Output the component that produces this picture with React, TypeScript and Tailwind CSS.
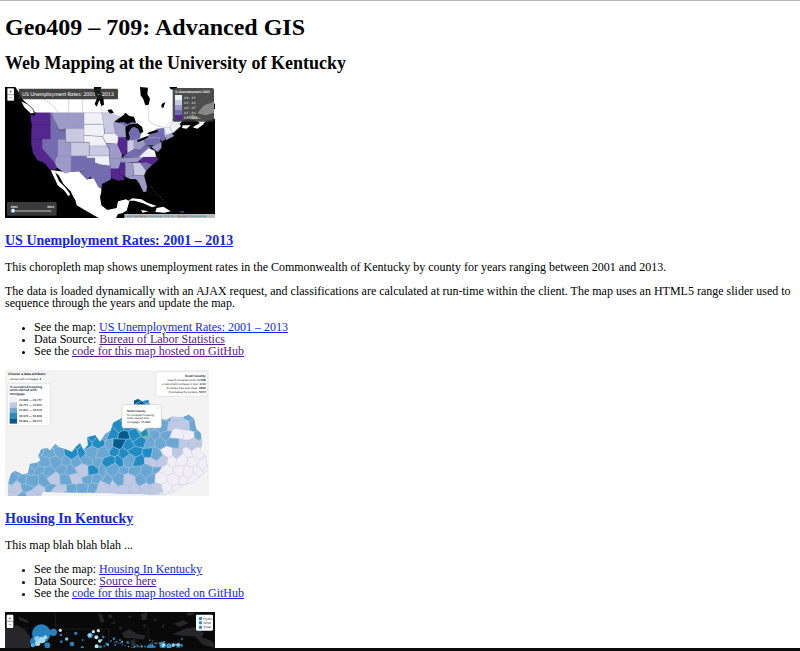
import type { ReactNode } from "react";

const deep = "#54278f";
const mid = "#756bb1";
const soft = "#9e9ac8";
const pale = "#cbc9e2";
const faint = "#f2f0f7";

const states: [string, string][] = [
  [deep, "92,104 104,107 107,98 152,98 152,134 96,134 92,118"],
  [deep, "96,134 152,134 152,178 94,178 94,158"],
  [deep, "94,178 127,178 127,205 165,248 170,262 166,270 148,268 135,250 112,240 99,218 94,192"],
  [mid, "127,178 174,178 174,228 168,232 165,248 127,205"],
  [mid, "152,98 158,98 160,115 168,128 172,146 184,152 197,148 197,178 152,178"],
  [soft, "158,98 252,98 252,146 197,146 184,150 174,146 168,128 160,115"],
  [pale, "197,145 252,145 252,187 197,187"],
  [soft, "174,178 197,178 197,187 213,187 213,228 174,228"],
  [pale, "213,187 268,187 268,228 213,228"],
  [soft, "174,228 213,228 213,275 195,280 170,262 165,248 168,232"],
  [mid, "213,228 260,228 260,272 222,274 213,275"],
  [faint, "252,98 306,98 311,133 252,133"],
  [faint, "252,133 311,133 314,165 308,170 252,166"],
  [faint, "252,166 308,170 322,198 268,199 268,187 252,187"],
  [pale, "268,198 322,198 328,208 328,228 268,228"],
  [faint, "260,228 328,228 330,258 300,254 284,248 284,234 260,234"],
  [mid, "260,234 284,234 284,248 300,254 330,258 335,282 331,300 314,314 307,327 296,322 282,296 270,290 262,300 238,275 260,272"],
  [pale, "306,98 325,98 360,110 342,126 345,160 314,160 311,133"],
  [faint, "314,160 350,160 358,175 352,192 318,190 308,170"],
  [soft, "318,191 352,192 366,222 364,236 328,235 328,205"],
  [soft, "328,235 364,235 358,268 332,268"],
  [deep, "332,266 357,266 357,285 370,287 374,300 356,303 334,294"],
  [deep, "362,247 376,246 376,288 358,285 356,266"],
  [soft, "340,130 352,124 378,138 382,172 356,172 345,160"],
  [mid, "353,123 372,112 408,128 396,134 378,140"],
  [mid, "392,142 408,136 416,148 424,160 418,179 390,181 386,160"],
  [deep, "355,172 380,172 383,205 376,226 366,222 354,196"],
  [pale, "382,181 402,180 402,208 382,220"],
  [soft, "402,180 430,175 437,195 420,210 402,208"],
  [mid, "366,233 382,220 402,208 420,212 428,220 415,232"],
  [soft, "364,235 436,230 412,246 360,247"],
  [mid, "420,210 437,196 452,200 440,220 426,222"],
  [faint, "415,232 426,222 446,204 464,212 469,232"],
  [deep, "430,232 472,232 474,240 458,254 440,246 410,249"],
  [mid, "420,249 440,247 456,254 438,272"],
  [pale, "398,248 420,248 438,272 432,287 402,286"],
  [soft, "376,246 398,248 402,286 382,292 376,290"],
  [soft, "380,291 402,286 432,287 441,320 438,335 430,335 418,310 408,297 392,298"],
  [mid, "430,176 475,172 482,184 475,195 437,196"],
  [mid, "440,174 450,160 472,146 492,144 496,178 488,184 474,172"],
  [faint, "492,144 512,140 516,160 498,162"],
  [faint, "510,140 518,122 532,122 543,138 518,160"],
  [soft, "496,165 516,161 522,168 498,180"],
  [soft, "474,192 484,186 484,204 472,216 454,200"],
];

function UnemploymentMap() {
  return (
    <svg
      role="img"
      aria-label="Choropleth map of US unemployment rates"
      viewBox="15 21 630 393"
      textRendering="geometricPrecision"
      className="block h-[131px] w-[210px] font-['Lato',sans-serif]"
    >
      <rect x="15" y="21" width="630" height="393" fill="#000" />
      <g fill="#fff">
        <path d="M46 21H645V70L625 84 610 100 632 96 645 86V116L620 122 606 134 592 124 570 116 548 122 534 138 518 158 500 170 480 178H360L300 130 108 98 96 90 82 72 66 56 57 38Z" />
        <path d="M62 62 82 72 98 86 104 100 92 101 72 82Z" stroke="#000" strokeWidth="2" />
        <path d="M152 270 196 276 238 274 262 298 282 294 296 320 307 327 300 350 304 376 322 390 350 384 354 364 378 358 388 364 380 392 366 400 354 402 348 414H296L258 392 230 376 226 360 190 312 176 286 172 288 184 312 204 332 212 344 206 348 196 332 178 320 162 292Z" />
        <path d="M384 362 398 355 424 358 442 368 470 378 456 382 430 370 404 362ZM470 384 490 380 512 394 494 398 466 396ZM423 390 446 394 428 398Z" />
        <path d="M578 142 598 130 612 132 592 146ZM548 136 572 136 560 146 546 144Z" />
      </g>
      <path d="M164 276 174 284 190 312 212 334 226 364 214 352 198 334 182 318 168 294Z" fill="#000" />
      <path d="M156 272 165 276 177 304 194 320 211 343 204 347 190 328 172 314Z" fill="#fff" />
      <path d="M540 393h12v5h-12Z" fill={deep} />
      <path
        d="M130 55 164 82 174 98M206 50V98M248 50V98M306 98 304 70M445 76V116L454 130 474 138 492 142 520 118"
        fill="none"
        stroke="#c4c4c4"
        strokeWidth="2"
      />
      <g fill="#000">
        <path d="M282 21 304 21 300 34 310 52 312 74 304 78 298 60 290 80 284 72 292 52 282 42Z" />
        <path d="M322 90 334 88 342 98 330 102ZM420 21 444 23 442 42 450 56 446 74 436 76 430 58 422 46ZM485 72 496 66 490 84 484 82ZM508 21 532 21 526 30 512 28Z" />
      </g>
      <g strokeWidth="1" strokeLinejoin="round">
        {states.map(([fill, points]) => (
          <polygon key={points} fill={fill} stroke={fill === deep ? "#4a2583" : "#8d88ab"} points={points} />
        ))}
      </g>
      <g fill="#000">
        <path d="M342 126 358 114 370 106 376 98 388 108 402 110 408 128 396 126 382 132 370 126 358 128Z" />
        <path d="M376 142 386 134 412 130 426 140 430 156 420 160 414 146 402 140 394 144 386 158 390 174 384 182 378 174ZM410 182 426 174 442 168 446 172 430 180 414 186ZM440 162 448 156 472 150 474 156 452 162Z" />
        <path d="M304 330 306 312 330 300 360 302 376 298 394 298 406 299 418 320 426 340 384 354 354 362 346 382 322 388 306 372Z" />
      </g>
      <path d="M452 318 466 340 484 354 494 368M448 338 456 346" fill="none" stroke="#777" strokeDasharray="3 6" strokeWidth="2" />
      <rect x="22" y="25" width="20" height="37" rx="3" fill="#fff" stroke="#888" />
      <path d="M28 35h8M32 31v8M28 53h8M22 44h20" stroke="#777" strokeWidth="2" />
      <rect x="56" y="26" width="298" height="32" rx="4" fill="#222" fillOpacity=".85" />
      <text x="66" y="48" fontSize="16" fill="#fff">US Unemployment Rates: 2001 – 2013</text>
      <g>
        <rect x="518" y="24" width="124" height="101" rx="5" fill="#333" fillOpacity=".88" />
        <path d="M592 100 612 76 642 66V98L618 106ZM558 110 580 104 604 116 570 118Z" fill="#888" />
        <path d="M518 118 560 84 600 70 638 30" fill="none" stroke="#555" strokeWidth="3" />
        <text x="525" y="38" fontSize="10" fontWeight="bold" fill="#fff">% Unemployment 2001</text>
        {[
          [faint, "2.8 – 3.7"],
          [pale, "3.7 – 4.3"],
          [soft, "4.3 – 4.7"],
          [mid, "4.7 – 5.6"],
          [deep, "5.6 – 11.4"],
        ].map(([fill, label], i) => (
          <g key={label}>
            <rect x="525" y={45 + i * 15} width="21" height="15" fill={fill} />
            <text x="552" y={56 + i * 15} fontSize="9" fontWeight="bold" fill="#ddd">{label}</text>
          </g>
        ))}
      </g>
      <rect x="21" y="366" width="149" height="41" rx="4" fill="#3b3b3b" />
      <g fontSize="9" fontWeight="bold" fill="#fff">
        <text x="32" y="383">2001</text>
        <text x="142" y="383">2013</text>
      </g>
      <path d="M36 393H154" stroke="#999" strokeWidth="5" />
      <circle cx="39" cy="392" r="6" fill="#fff" stroke="#2b8bdc" strokeWidth="2" />
      <rect x="373" y="402" width="272" height="12" fill="#bbb" />
      <text x="376" y="410" fontSize="7" fill="#333">
        <tspan fill="#0078a8">Leaflet</tspan> | Map tiles by <tspan fill="#0078a8">Stamen Design, CC BY 3.0</tspan> — Map data © <tspan fill="#0078a8">OpenStreetMap</tspan>
      </text>
    </svg>
  );
}

// Seeds that decide the class of the counties around them.
const seeds: [number, number, string][] = [
  [40, 335, "#6ba7d3"], [40, 374, "#c0c8e4"], [72, 370, "#6ba7d3"], [104, 374, "#c0c8e4"],
  [110, 325, "#6ba7d3"], [140, 350, "#6ba7d3"], [175, 345, "#c0c8e4"], [150, 270, "#6ba7d3"],
  [205, 350, "#6ba7d3"], [210, 290, "#6ba7d3"], [240, 312, "#c0c8e4"], [238, 240, "#218bc3"],
  [282, 224, "#218bc3"], [282, 312, "#218bc3"], [265, 270, "#6ba7d3"], [260, 350, "#6ba7d3"],
  [310, 330, "#6ba7d3"], [320, 366, "#c0c8e4"], [305, 250, "#6ba7d3"], [322, 215, "#6ba7d3"],
  [330, 260, "#218bc3"], [350, 196, "#218bc3"], [362, 217, "#045a8d"], [345, 240, "#218bc3"],
  [375, 165, "#218bc3"], [375, 245, "#218bc3"], [411, 104, "#045a8d"], [435, 104, "#218bc3"],
  [395, 215, "#218bc3"], [405, 240, "#218bc3"], [434, 262, "#218bc3"], [450, 252, "#6ba7d3"],
  [340, 285, "#218bc3"], [370, 270, "#218bc3"], [405, 265, "#218bc3"],
  [430, 190, "#6ba7d3"], [455, 215, "#6ba7d3"], [485, 175, "#6ba7d3"], [500, 215, "#6ba7d3"],
  [350, 318, "#6ba7d3"], [400, 295, "#6ba7d3"], [428, 318, "#6ba7d3"], [465, 322, "#6ba7d3"],
  [345, 350, "#c0c8e4"], [390, 350, "#c0c8e4"], [450, 360, "#c0c8e4"], [465, 290, "#c0c8e4"],
  [530, 168, "#c0c8e4"], [570, 160, "#6ba7d3"], [590, 185, "#6ba7d3"], [540, 235, "#c0c8e4"],
  [557, 208, "#f1eef6"], [590, 220, "#c0c8e4"], [510, 260, "#f1eef6"], [520, 310, "#f1eef6"],
  [570, 280, "#f1eef6"], [605, 275, "#f1eef6"], [500, 350, "#f1eef6"], [540, 350, "#f1eef6"],
];

function countyFill(x: number, y: number) {
  let best = Infinity;
  let fill = "#6ba7d3";
  for (const [sx, sy, color] of seeds) {
    const d = (sx - x) ** 2 + (sy - y) ** 2;
    if (d < best) {
      best = d;
      fill = color;
    }
  }
  return fill;
}

function jitter(x: number, y: number): [number, number] {
  const a = Math.sin(Math.round(x) * 12.9 + Math.round(y) * 78.2) * 4375;
  const b = Math.sin(Math.round(x) * 39.3 + Math.round(y) * 11.1) * 2463;
  return [x + (a - Math.floor(a) - 0.5) * 14, y + (b - Math.floor(b) - 0.5) * 14];
}

const counties: { points: string; fill: string }[] = [];
for (let row = 0; row < 12; row++) {
  for (let col = 0; col < 20; col++) {
    const cx = 20 + col * 32 + (row % 2) * 16;
    const cy = 92 + row * 27;
    const corners = [[0, -18], [16, -9], [16, 9], [0, 18], [-16, 9], [-16, -9]];
    counties.push({
      points: corners.map(([dx, dy]) => jitter(cx + dx, cy + dy).map(Math.round).join(",")).join(" "),
      fill: countyFill(cx, cy),
    });
  }
}

function HousingMap() {
  return (
    <svg
      role="img"
      aria-label="Choropleth map of housing in Kentucky"
      viewBox="15 6 612 378"
      textRendering="geometricPrecision"
      className="block h-[126px] w-[204px] font-['Liberation_Sans',Arial,sans-serif]"
    >
      <rect x="15" y="6" width="612" height="378" fill="#f3f3f3" />
      <clipPath id="kentucky">
        <path d="M25 384V344L34 316 46 309 68 320 84 316 90 288 112 284 122 276 115 264 124 244 142 240 150 248 166 228 176 238 196 244 216 252 228 236 240 226 250 246 264 232 262 208 286 202 300 222 316 198 332 188 340 164 366 150 386 138 402 116 402 98 414 93 426 100 445 96 452 122 482 154 500 156 516 146 548 148 566 140 582 152 588 182 602 196 606 228 600 246 616 266 625 304 582 342 550 352 520 374 490 380 300 374 128 372 122 384Z" />
      </clipPath>
      <g clipPath="url(#kentucky)" stroke="#a9c8e0" strokeWidth="1.5" strokeLinejoin="round">
        <rect x="15" y="80" width="612" height="304" fill="#6ba7d3" />
        {counties.map((c) => (
          <polygon
            key={c.points}
            points={c.points}
            fill={c.fill}
            stroke={c.fill === "#f1eef6" ? "#dcdbe8" : "#a9c8e0"}
          />
        ))}
      </g>
      <path d="M418 190 440 182 446 202 426 208Z" fill="#218bc3" stroke="#7fc77d" strokeWidth="3" />
      <text x="24" y="20" fontSize="10" fontWeight="bold" fill="#222">Choose a data attribute:</text>
      <rect x="23" y="25" width="106" height="16" rx="4" fill="#fff" />
      <text x="29" y="36" fontSize="9" fill="#222">owned with mortgage ⬍</text>
      <rect x="23" y="47" width="129" height="126" rx="4" fill="#fff" stroke="#ddd" strokeWidth="2" />
      <g fontSize="10" fontWeight="bold" fill="#24304a">
        <text x="29" y="60">% occupied housing</text>
        <text x="29" y="70">units owned with</text>
        <text x="29" y="80">mortgage</text>
      </g>
      {[
        ["#f1eef6", "24.983 — 33.757"],
        ["#bdc9e1", "33.757 — 40.812"],
        ["#74a9cf", "40.812 — 46.976"],
        ["#2b8cbe", "46.976 — 56.849"],
        ["#045a8d", "56.849 — 66.272"],
      ].map(([fill, label], i) => (
        <g key={label}>
          <rect x="29" y={87 + i * 16} width="22" height="16" fill={fill} />
          <text x="57" y={98 + i * 16} fontSize="9" fontWeight="bold" fill="#444">{label}</text>
        </g>
      ))}
      <rect x="468" y="11" width="155" height="74" rx="4" fill="#fff" stroke="#ddd" strokeWidth="2" />
      <g textAnchor="end" fontSize="9" fill="#222">
        <text x="617" y="26" fontSize="10" fontWeight="bold">Scott County</text>
        <text x="617" y="40">total # occupied units: <tspan fontWeight="bold">17408</tspan></text>
        <text x="617" y="52" fontSize="8"># owned with mortgage or loan: <tspan fontWeight="bold">9730</tspan></text>
        <text x="617" y="64"># owned free and clear: <tspan fontWeight="bold">2606</tspan></text>
        <text x="617" y="76"># occupied by renters: <tspan fontWeight="bold">5072</tspan></text>
      </g>
      <path d="M373 110H479Q484 110 484 116V174Q484 180 478 180H439L424 192 409 180H373Q366 180 366 174V117Q366 110 373 110Z" fill="#fff" stroke="#ccc" strokeWidth="2" />
      <g fontSize="9" fill="#222">
        <text x="381" y="131" fontWeight="bold">Scott County</text>
        <text x="381" y="143">% occupied housing</text>
        <text x="381" y="154">units owned with</text>
        <text x="381" y="166">mortgage: 55.894</text>
        <text x="471" y="123" fill="#999">×</text>
      </g>
    </svg>
  );
}

const plants: [number, number, number, string][] = [
  [124, 86, 28, "#2582bd"], [160, 82, 11, "#2582bd"], [104, 110, 14, "#2582bd"], [142, 121, 9, "#2582bd"],
  [111, 101, 8, "#8ac7e6"], [126, 105, 10, "#a9d9ec"], [113, 115, 8, "#a9d9ec"], [98, 121, 6, "#5baed9"], [136, 97, 6, "#a9d9ec"],
  [181, 76, 5, "#b9e3f0"], [183, 90, 4, "#2582bd"], [200, 102, 5, "#8ac7e6"], [227, 85, 5, "#2582bd"], [216, 117, 7, "#2582bd"], [184, 110, 4, "#2582bd"],
  [270, 91, 8, "#4ca6db"], [269, 91, 4, "#b9e3f0"], [280, 80, 5, "#b9e3f0"], [295, 77, 5, "#b9e3f0"], [289, 97, 6, "#b9e3f0"], [299, 108, 5, "#b9e3f0"], [290, 124, 6, "#b9e3f0"], [301, 126, 5, "#2582bd"], [310, 96, 4, "#2582bd"],
  [248, 105, 3, "#2582bd"], [247, 128, 5, "#2582bd"], [323, 119, 4, "#5baed9"], [342, 101, 4, "#2582bd"], [360, 105, 3, "#2582bd"], [383, 112, 3, "#2582bd"],
  [452, 130, 12, "#2582bd"], [488, 120, 10, "#2582bd"], [490, 121, 6, "#b9e3f0"], [507, 123, 8, "#4ca6db"], [520, 120, 5, "#b9e3f0"], [535, 120, 6, "#8ac7e6"], [546, 102, 3, "#2582bd"], [544, 121, 5, "#2582bd"],
];

function PowerMap() {
  return (
    <svg
      role="img"
      aria-label="Map of hydro, wind and solar power plants"
      viewBox="15 21 630 393"
      textRendering="geometricPrecision"
      className="block h-[131px] w-[210px] font-['Liberation_Sans',Arial,sans-serif]"
    >
      <rect x="15" y="21" width="630" height="393" fill="#090909" />
      <g fill="#272729">
        <path d="M15 66 30 70 50 60 74 74 90 96 90 132 110 414H15Z" />
        <path d="M56 34 90 50 82 54 58 44ZM294 24 306 30 314 50 302 54ZM422 28 442 22 440 44 426 46ZM366 84 388 72 410 86 438 92 430 104 396 100 372 98ZM390 108 404 102 412 130 396 130Z" />
        <path d="M518 88 552 72 584 66 612 84 604 96 640 110 645 128 610 120 584 94 548 92ZM520 56 550 46 566 54 540 66ZM560 24 582 22 578 30 562 32ZM324 30 334 28 338 38 326 40Z" />
        <path d="M332 56 346 48 344 56ZM354 70 366 64 364 74ZM384 36 394 30 392 40ZM458 46 470 38 468 48ZM484 64 496 54 490 70ZM426 62 440 56 434 68Z" />
      </g>
      <path d="M15 70H88M166 22V72H326V128M444 70V100" fill="none" stroke="#252528" strokeWidth="2" />
      {plants.map(([x, y, r, fill]) => (
        <circle key={`${x}-${y}-${r}`} cx={x} cy={y} r={r} fill={fill} />
      ))}
      {Array.from({ length: 60 }, (_, i) => {
        const [dx, dy] = jitter(i * 7, i * 13);
        return (
          <circle
            key={i}
            cx={312 + ((i * 53) % 232) + (dx - i * 7)}
            cy={112 + ((i * 29) % 20) + (dy - i * 13)}
            r={i % 3 === 0 ? 3 : 2}
            fill={i % 4 === 0 ? "#84bbb9" : "#257fb6"}
          />
        );
      })}
      <text x="453" y="116" fontSize="8" fill="#999">TORONTO</text>
      <rect x="20" y="29" width="20" height="40" rx="3" fill="#fff" />
      <path d="M26 40h8M30 36v8M26 59h8M20 49h20" stroke="#777" strokeWidth="2" />
      <rect x="588" y="29" width="51" height="48" rx="4" fill="#fff" />
      {["Hydro", "Wind", "Solar"].map((label, i) => (
        <g key={label}>
          <rect x="597" y={36 + i * 13} width="9" height="9" rx="2" fill="#2c82e4" />
          <text x="610" y={44 + i * 13} fontSize="10" fill="#333">{label}</text>
        </g>
      ))}
    </svg>
  );
}

function Link({ children, visited = false }: { children: ReactNode; visited?: boolean }) {
  return (
    <a href="#" className={visited ? "text-[#551a8b] underline" : "text-[#1226ee] underline"}>
      {children}
    </a>
  );
}

function Title({ children }: { children: ReactNode }) {
  return (
    <h3 className="mt-[15px] text-[14px] leading-4 font-bold">
      <Link>{children}</Link>
    </h3>
  );
}

export default function App() {
  return (
    <div className="flex h-screen flex-col border-t border-[#b5b5b5] bg-white font-['Liberation_Serif','Times_New_Roman',serif] text-[12px] leading-3 text-black">
      <main className="min-h-0 flex-1 overflow-hidden px-[5px] pt-3">
        <h1 className="text-[24px] leading-7 font-bold">Geo409 – 709: Advanced GIS</h1>
        <h2 className="mt-3 mb-3.5 text-[18px] leading-5 font-bold">Web Mapping at the University of Kentucky</h2>

        <section className="mb-[13px]">
          <UnemploymentMap />
          <Title>US Unemployment Rates: 2001 – 2013</Title>
          <p className="mt-3">
            This choropleth map shows unemployment rates in the Commonwealth of Kentucky by county for years ranging between 2001 and 2013.
          </p>
          <p className="mt-3">
            The data is loaded dynamically with an AJAX request, and classifications are calculated at run-time within the client. The map uses an HTML5 range slider used to sequence through the years and update the map.
          </p>
          <ul className="mt-3 list-disc pl-[29px] marker:text-[9px]">
            <li>See the map: <Link>US Unemployment Rates: 2001 – 2013</Link></li>
            <li>Data Source: <Link visited>Bureau of Labor Statistics</Link></li>
            <li>See the <Link visited>code for this map hosted on GitHub</Link></li>
          </ul>
        </section>

        <section className="mb-[13px]">
          <HousingMap />
          <Title>Housing In Kentucky</Title>
          <p className="mt-3">This map blah blah blah ...</p>
          <ul className="mt-3 list-disc pl-[29px] marker:text-[9px]">
            <li>See the map: <Link>Housing In Kentucky</Link></li>
            <li>Data Source: <Link visited>Source here</Link></li>
            <li>See the <Link>code for this map hosted on GitHub</Link></li>
          </ul>
        </section>

        <PowerMap />
      </main>
      <div className="h-[3px] shrink-0 bg-[#0b0b0b]" />
    </div>
  );
}
